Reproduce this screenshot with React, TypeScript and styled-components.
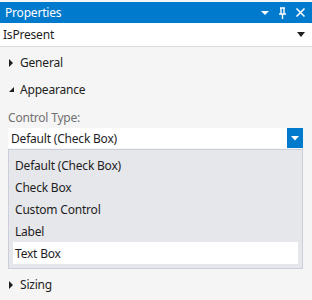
import React from "react";
import styled, { createGlobalStyle } from "styled-components";

const GlobalStyle = createGlobalStyle`
  html, body {
    margin: 0;
    padding: 0;
    background: #f5f5f5;
  }
  body {
    font-family: "Noto Sans", "Open Sans", sans-serif;
    font-size: 12px;
  }
`;

const options = [
  "Default (Check Box)",
  "Check Box",
  "Custom Control",
  "Label",
  "Text Box",
];

const Triangle: React.FC<{ open?: boolean }> = ({ open }) =>
  open ? (
    <svg width="7" height="7" viewBox="0 0 7 7">
      <polygon points="6,1 6,6 1,6" fill="#1e1e1e" />
    </svg>
  ) : (
    <svg width="7" height="8" viewBox="0 0 7 8">
      <polygon points="1,0 5,4 1,8" fill="#1e1e1e" />
    </svg>
  );

export default function App() {
  return (
    <>
      <GlobalStyle />
      <Panel>
        <TitleBar>
          <Title>Properties</Title>
          <Grip />
          <TitleIcons>
            <svg width="9" height="6" viewBox="0 0 9 6">
              <polygon points="0,1 8,1 4,5" fill="#fff" />
            </svg>
            <svg width="9" height="12" viewBox="0 0 9 12">
              <path
                d="M2 1h5M3 1v6M6 1v6M1 7h7M4.5 7v5"
                stroke="#fff"
                strokeWidth="1.4"
                fill="none"
              />
            </svg>
            <svg width="11" height="11" viewBox="0 0 11 11">
              <path
                d="M1.5 1.5l8 8M9.5 1.5l-8 8"
                stroke="#fff"
                strokeWidth="1.6"
              />
            </svg>
          </TitleIcons>
        </TitleBar>
        <ObjectCombo>
          <span>IsPresent</span>
          <svg width="9" height="6" viewBox="0 0 9 6">
            <polygon points="0,0 8,0 4,5" fill="#1e1e1e" />
          </svg>
        </ObjectCombo>
        <Body>
          <Category>
            <Triangle />
            General
          </Category>
          <Category>
            <Triangle open />
            Appearance
          </Category>
          <Field>
            <FieldLabel>Control Type:</FieldLabel>
            <Select>
              <SelectValue>Default (Check Box)</SelectValue>
              <SelectButton>
                <svg width="8" height="5" viewBox="0 0 8 5">
                  <polygon points="0,0 8,0 4,4.5" fill="#fff" />
                </svg>
              </SelectButton>
            </Select>
            <ListBox>
              {options.map((o) => (
                <Option key={o} selected={o === "Text Box"}>
                  {o}
                </Option>
              ))}
            </ListBox>
          </Field>
          <Category>
            <Triangle />
            Sizing
          </Category>
        </Body>
      </Panel>
    </>
  );
}

const Panel = styled.div`
  width: 312px;
  height: 300px;
  padding-top: 2px;
  box-sizing: border-box;
  background: #f5f5f5;
  display: flex;
  flex-direction: column;
  overflow: hidden;
`;

const TitleBar = styled.div`
  height: 21px;
  background: #007acc;
  display: flex;
  align-items: center;
  padding: 0 6px 0 5px;
  color: #fff;
`;

const Title = styled.span`
  font-size: 12px;
  line-height: 1;
  letter-spacing: -0.2px;
`;

const Grip = styled.div`
  flex: 1;
  height: 5px;
  margin: 0 8px 0 8px;
  background-image: radial-gradient(
    circle,
    rgba(255, 255, 255, 0.55) 0.6px,
    transparent 0.7px
  );
  background-size: 2px 2px;
`;

const TitleIcons = styled.div`
  display: flex;
  align-items: center;
  gap: 8px;
`;

const ObjectCombo = styled.div`
  height: 23px;
  background: #fff;
  border-bottom: 1px solid #dcdcdc;
  display: flex;
  align-items: center;
  justify-content: space-between;
  padding: 0 6px 0 3px;
  color: #1e1e1e;
  font-size: 12px;
  letter-spacing: -0.2px;
`;

const Body = styled.div`
  display: flex;
  flex-direction: column;
  padding: 2px 9px 0 8px;
  letter-spacing: -0.2px;
`;

const Category = styled.div`
  height: 27px;
  display: flex;
  align-items: center;
  gap: 5px;
  color: #1e1e1e;
  font-size: 12px;
`;

const Field = styled.div`
  display: flex;
  flex-direction: column;
  padding-top: 5px;
  margin-bottom: 2px;
`;

const FieldLabel = styled.div`
  color: #717171;
  font-size: 12px;
  height: 20px;
  line-height: 20px;
`;

const Select = styled.div`
  height: 20px;
  background: #fff;
  display: flex;
  align-items: stretch;
`;

const SelectValue = styled.div`
  flex: 1;
  display: flex;
  align-items: center;
  padding-left: 3px;
  color: #1e1e1e;
  font-size: 12px;
`;

const SelectButton = styled.div`
  width: 16px;
  background: #007acc;
  display: flex;
  align-items: center;
  justify-content: center;
`;

const ListBox = styled.div`
  margin-top: 1px;
  background: #e6e7eb;
  border: 1px solid #cccedb;
  padding: 4px;
  display: flex;
  flex-direction: column;
`;

const Option = styled.div<{ selected?: boolean }>`
  height: 22px;
  display: flex;
  align-items: center;
  padding-left: 2px;
  background: ${(p) => (p.selected ? "#fff" : "transparent")};
  color: #1e1e1e;
  font-size: 12px;
`;
